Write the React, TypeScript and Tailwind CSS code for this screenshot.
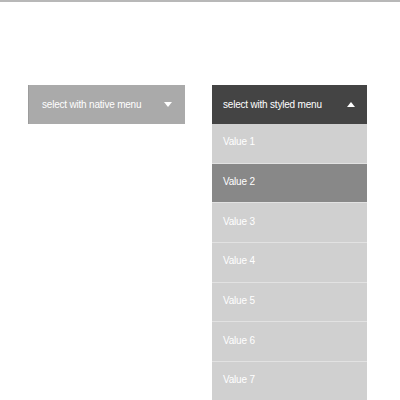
import React from "react"

const values = ["Value 1", "Value 2", "Value 3", "Value 4", "Value 5", "Value 6", "Value 7"]

function Caret({ up }: { up?: boolean }) {
  return (
    <svg width="8" height="5" viewBox="0 0 8 5" className="block">
      {up ? <polygon points="0,5 8,5 4,0" fill="#fff" /> : <polygon points="0,0 8,0 4,5" fill="#fff" />}
    </svg>
  )
}

export default function App() {
  return (
    <div
      className="w-[400px] h-[400px] overflow-hidden bg-white"
      style={{ fontFamily: "'Liberation Sans', Arial, sans-serif" }}
    >
      <div className="h-[2px] bg-[#b8b8b8]" />
      <div className="flex items-start gap-[27px] pl-[28px] pt-[83px]">
        {/* native select */}
        <div className="w-[157px] h-[39px] bg-[#aaaaaa] border-l border-[#9c9c9c] flex items-center justify-between pl-[13px] pr-[13px] text-white text-[10px] tracking-[-0.2px]">
          <span>select with native menu</span>
          <Caret />
        </div>

        {/* styled select */}
        <div className="w-[155px]">
          <div className="h-[39px] bg-[#444444] flex items-center justify-between pl-[11px] pr-[12px] text-white text-[10px] tracking-[-0.2px]">
            <span>select with styled menu</span>
            <Caret up />
          </div>
          <ul>
            {values.map((v, i) => (
              <li
                key={v}
                className={
                  i === 1
                    ? "h-[39.7px] flex items-center pl-[11px] pb-[3px] text-white text-[10px] tracking-[-0.2px] bg-[#888888] border-b border-[#e2e2e2]"
                    : "h-[39.7px] flex items-center pl-[11px] pb-[3px] text-white text-[10px] tracking-[-0.2px] bg-[#d0d0d0] border-b border-[#e2e2e2]"
                }
              >
                {v}
              </li>
            ))}
          </ul>
        </div>
      </div>
    </div>
  )
}
